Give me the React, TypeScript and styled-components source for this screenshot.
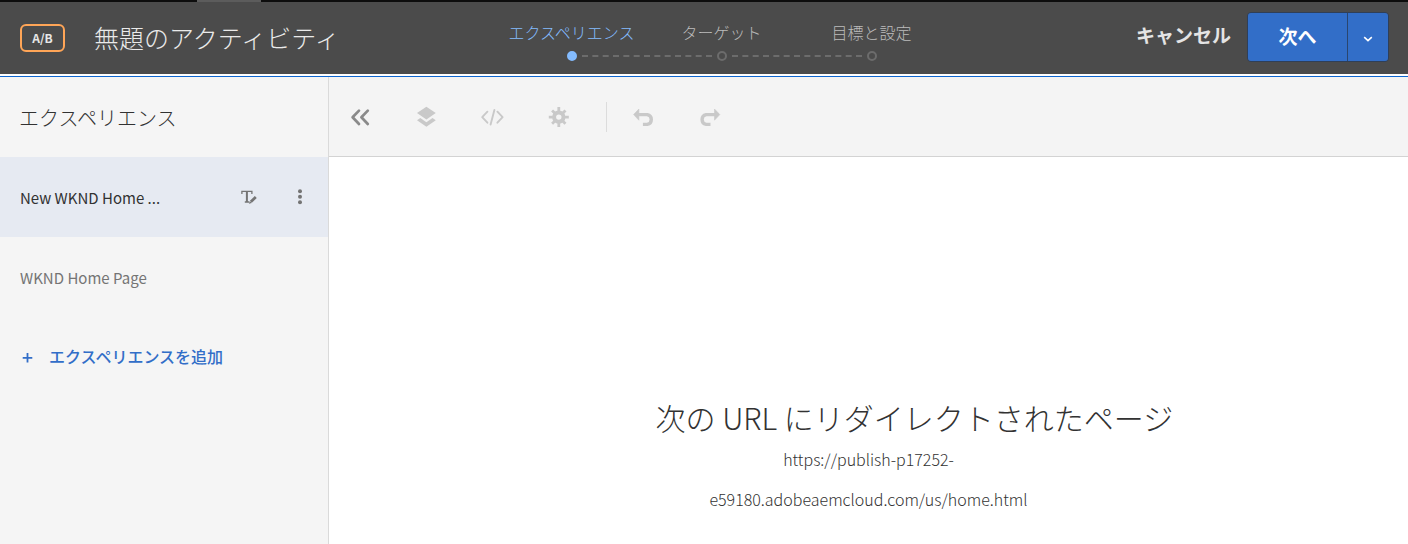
import React from "react";
import styled, { createGlobalStyle } from "styled-components";

const GlobalStyle = createGlobalStyle`
  *, *::before, *::after { box-sizing: border-box; }
  html, body, #root { height: 100%; }
  body {
    margin: 0;
    background: #ffffff;
    color: #323232;
    font-family: "Noto Sans CJK JP", sans-serif;
    font-size: 16px;
  }
  button { font-family: inherit; cursor: pointer; }
`;

const Page = styled.div`
  display: flex;
  flex-direction: column;
  min-height: 100%;
`;

const TopStrip = styled.div`
  height: 2px;
  padding-left: 197px;
  background: #0d0d0d;
`;

const TopStripThumb = styled.div`
  width: 64px;
  height: 2px;
  background: #5c5c5c;
`;

const Header = styled.header`
  display: grid;
  grid-template-columns: 1fr auto 1fr;
  height: 72px;
  padding: 0 19px 0 20px;
  background: #4b4b4b;
`;

const TitleGroup = styled.div`
  display: flex;
  align-items: center;
  gap: 29px;
`;

const Badge = styled.span`
  display: flex;
  align-items: center;
  justify-content: center;
  width: 45px;
  height: 28px;
  padding-bottom: 2px;
  border: 2px solid #ffa557;
  border-radius: 6px;
  color: #e6e6e6;
  font-size: 12px;
  font-weight: 700;
`;

const Title = styled.h1`
  margin: 0;
  padding-bottom: 2px;
  color: #eaeaea;
  font-size: 25px;
  font-weight: 300;
  line-height: 36px;
  white-space: nowrap;
`;

const Steps = styled.ol`
  display: flex;
  margin: 0 0 0 34px;
  padding: 18px 0 0;
  list-style: none;
`;

const Step = styled.li<{ $active?: boolean }>`
  display: flex;
  flex-direction: column;
  align-items: center;
  gap: 6px;
  width: 150px;
  color: ${(p) => (p.$active ? "#84bcff" : "#bcbcbc")};
  font-weight: 300;
  line-height: 25px;
  white-space: nowrap;
`;

const Track = styled.div`
  display: grid;
  grid-template-columns: 65px 10px 65px;
  gap: 5px;
  align-items: center;
  width: 150px;
`;

const StepDot = styled.span<{ $active?: boolean }>`
  grid-column: 2;
  width: 10px;
  height: 10px;
  border: 2px solid ${(p) => (p.$active ? "#84bcff" : "#6c6c6c")};
  border-radius: 50%;
  background: ${(p) => (p.$active ? "#84bcff" : "transparent")};
`;

const StepLine = styled.span`
  grid-column: 3;
  width: 130px;
  border-top: 2px dashed #6c6c6c;
`;

const Actions = styled.div`
  display: flex;
  align-items: center;
  justify-content: flex-end;
  gap: 16px;
  padding-bottom: 2px;
`;

const CancelButton = styled.button`
  padding: 0 0 4px;
  border: 0;
  background: none;
  color: #e4e4e4;
  font-size: 19px;
  font-weight: 700;
  line-height: 28px;
  white-space: nowrap;
`;

const SplitButton = styled.div`
  display: flex;
  height: 50px;
  overflow: hidden;
  border: 1px solid #2f3f58;
  border-radius: 4px;
`;

const NextButton = styled.button`
  width: 99px;
  padding: 0 0 4px;
  border: 0;
  background: #326ec8;
  color: #ffffff;
  font-size: 19px;
  font-weight: 700;
`;

const NextMenuButton = styled.button`
  display: flex;
  align-items: center;
  justify-content: center;
  width: 41px;
  padding: 4px 0 0;
  border: 0;
  border-left: 1px solid #2a466f;
  background: #326ec8;
  color: #ffffff;
`;

const Body = styled.div`
  display: flex;
  flex: 1;
  margin-top: 2px;
  border-top: 1px solid #0d66d0;
`;

const Sidebar = styled.aside`
  flex: none;
  width: 329px;
  border-right: 1px solid #dadada;
  background: #f5f5f5;
`;

const SidebarTitle = styled.h2`
  margin: 0;
  padding: 2px 19px 0;
  font-size: 20px;
  font-weight: 300;
  line-height: 78px;
`;

const ExperienceList = styled.ul`
  margin: 0;
  padding: 0;
  list-style: none;
`;

const Experience = styled.li<{ $selected?: boolean }>`
  display: flex;
  align-items: center;
  height: 80px;
  padding: 0 18px 0 20px;
  background: ${(p) => (p.$selected ? "#e6eaf2" : "transparent")};
  color: ${(p) => (p.$selected ? "#323232" : "#747474")};
`;

const ExperienceName = styled.span`
  flex: 1;
  font-size: 15px;
  white-space: nowrap;
`;

const RowButton = styled.button`
  display: flex;
  padding: 0;
  border: 0;
  margin-left: 32px;
  background: none;
  color: #747474;
`;

const AddButton = styled.button`
  display: flex;
  align-items: center;
  gap: 16px;
  height: 80px;
  padding: 0 22px 2px;
  border: 0;
  background: none;
  color: #326ec8;
  font-size: 16px;
  font-weight: 500;
`;

const Workspace = styled.main`
  display: flex;
  flex: 1;
  flex-direction: column;
  min-width: 0;
  background: #ffffff;
`;

const Toolbar = styled.div`
  display: flex;
  align-items: center;
  height: 80px;
  padding-left: 19px;
  gap: 42px;
  border-bottom: 1px solid #d3d3d3;
  background: #f4f4f4;
`;

const ToolButton = styled.button<{ $enabled?: boolean }>`
  display: flex;
  justify-content: center;
  width: 24px;
  padding: 0;
  border: 0;
  background: none;
  color: ${(p) => (p.$enabled ? "#8a8a8a" : "#c9c9c9")};
`;

const ToolDivider = styled.span`
  width: 1px;
  height: 30px;
  margin: 0 -17px 0 -6px;
  background: #dcdcdc;
`;

const Preview = styled.section`
  padding-top: 239px;
  text-align: center;
`;

const RedirectNotice = styled.div`
  width: 426px;
  margin: 0 auto;
`;

const RedirectTitle = styled.h2`
  margin: 0;
  font-size: 30px;
  font-weight: 300;
  line-height: 43px;
  text-align: left;
  white-space: nowrap;
`;

const RedirectUrl = styled.p`
  margin: 0;
  font-size: 16px;
  font-weight: 300;
  line-height: 40px;
`;

const CollapseIcon = () => (
  <svg width="20" height="20" viewBox="0 0 20 20" fill="none" stroke="currentColor" strokeWidth="2.7" strokeLinecap="round" strokeLinejoin="round">
    <path d="M9 3.6 2.6 10.2 9 17M17.8 3.6 11.4 10.2l6.4 6.8" />
  </svg>
);

const LayersIcon = () => (
  <svg width="20" height="21" viewBox="0 0 20 21" fill="currentColor">
    <path d="M10.4 .7 19.8 7.1 10.4 13.6 1 7.1ZM1 14.2l3.3-2.3 6.1 4.3 6.1-4.3 3.3 2.3-9.4 6.6Z" />
  </svg>
);

const CodeIcon = () => (
  <svg width="24" height="20" viewBox="0 0 24 20" fill="none" stroke="currentColor" strokeWidth="1.9" strokeLinecap="round" strokeLinejoin="round">
    <path d="M7.4 4.7 2.2 10.2l5.2 5.5M14.4 3 10.6 17.6M17.4 4.7l5.2 5.5-5.2 5.5" />
  </svg>
);

const GearIcon = () => (
  <svg width="21" height="20" viewBox="0 0 21 20" stroke="currentColor" fill="none">
    <circle cx="10.8" cy="10.1" r="4.7" strokeWidth="4" />
    <path
      d="M10.8 .1v4M10.8 16.1v4M.8 10.1h4M16.8 10.1h4M4.1 3.4l2.6 2.6M14.9 14.2l2.6 2.6M17.5 3.4l-2.6 2.6M6.7 14.2l-2.6 2.6"
      strokeWidth="2.8"
    />
  </svg>
);

const UndoIcon = () => (
  <svg width="22" height="20" viewBox="0 0 22 20">
    <path d="M5 7.6h9.3a5 5 0 0 1 0 9.8H9.9" fill="none" stroke="currentColor" strokeWidth="3.4" />
    <path d="M.6 7.6 5.9 2v11.2Z" fill="currentColor" stroke="currentColor" strokeWidth=".6" strokeLinejoin="round" />
  </svg>
);

const RedoIcon = () => (
  <svg width="22" height="20" viewBox="0 0 22 20">
    <path d="M16.4 7.6H7.1a5 5 0 0 0 0 9.8h4.4" fill="none" stroke="currentColor" strokeWidth="3.4" />
    <path d="M20.8 7.6 15.5 2v11.2Z" fill="currentColor" stroke="currentColor" strokeWidth=".6" strokeLinejoin="round" />
  </svg>
);

const RenameIcon = () => (
  <svg width="18" height="16" viewBox="0 0 18 16" fill="none" stroke="currentColor">
    <path d="M1.9 5V2.4h10V5M4.8 13h4.2" strokeWidth="1.3" />
    <path d="M6.9 2.4V13" strokeWidth="2" />
    <path d="m10.9 12.8 4.9-4.8" strokeWidth="2.8" />
    <path d="m8.9 14.8.9-2.9 2 2Z" fill="currentColor" stroke="none" />
  </svg>
);

const MoreIcon = () => (
  <svg width="20" height="16" viewBox="0 0 20 16" fill="currentColor">
    <circle cx="10" cy="2.2" r="2" />
    <circle cx="10" cy="7.7" r="2" />
    <circle cx="10" cy="13.2" r="2" />
  </svg>
);

const ChevronIcon = () => (
  <svg width="10" height="6" viewBox="0 0 10 6" fill="none" stroke="currentColor" strokeWidth="1.6">
    <path d="M1.2 1.2 5 4.6l3.8-3.4" />
  </svg>
);

const PlusIcon = () => (
  <svg width="11" height="13" viewBox="0 0 11 13" stroke="currentColor" strokeWidth="1.8">
    <path d="M5.5 3v9.6M.7 7.8h9.6" />
  </svg>
);

const steps = ["エクスペリエンス", "ターゲット", "目標と設定"];

export default function App() {
  return (
    <>
      <GlobalStyle />
      <Page>
        <TopStrip>
          <TopStripThumb />
        </TopStrip>
        <Header>
          <TitleGroup>
            <Badge>A/B</Badge>
            <Title>無題のアクティビティ</Title>
          </TitleGroup>
          <Steps>
            {steps.map((label, i) => (
              <Step key={label} $active={i === 0} aria-current={i === 0 ? "step" : undefined}>
                {label}
                <Track>
                  <StepDot $active={i === 0} />
                  {i < steps.length - 1 && <StepLine />}
                </Track>
              </Step>
            ))}
          </Steps>
          <Actions>
            <CancelButton type="button">キャンセル</CancelButton>
            <SplitButton>
              <NextButton type="button">次へ</NextButton>
              <NextMenuButton type="button" aria-label="その他の操作">
                <ChevronIcon />
              </NextMenuButton>
            </SplitButton>
          </Actions>
        </Header>
        <Body>
          <Sidebar>
            <SidebarTitle>エクスペリエンス</SidebarTitle>
            <ExperienceList>
              <Experience $selected>
                <ExperienceName>New WKND Home ...</ExperienceName>
                <RowButton type="button" aria-label="名前を変更">
                  <RenameIcon />
                </RowButton>
                <RowButton type="button" aria-label="メニュー">
                  <MoreIcon />
                </RowButton>
              </Experience>
              <Experience>
                <ExperienceName>WKND Home Page</ExperienceName>
              </Experience>
            </ExperienceList>
            <AddButton type="button">
              <PlusIcon />
              エクスペリエンスを追加
            </AddButton>
          </Sidebar>
          <Workspace>
            <Toolbar role="toolbar">
              <ToolButton type="button" $enabled aria-label="パネルを閉じる">
                <CollapseIcon />
              </ToolButton>
              <ToolButton type="button" aria-label="レイヤー">
                <LayersIcon />
              </ToolButton>
              <ToolButton type="button" aria-label="コード">
                <CodeIcon />
              </ToolButton>
              <ToolButton type="button" aria-label="設定">
                <GearIcon />
              </ToolButton>
              <ToolDivider />
              <ToolButton type="button" aria-label="元に戻す">
                <UndoIcon />
              </ToolButton>
              <ToolButton type="button" aria-label="やり直す">
                <RedoIcon />
              </ToolButton>
            </Toolbar>
            <Preview>
              <RedirectNotice>
                <RedirectTitle>次の URL にリダイレクトされたページ</RedirectTitle>
                <RedirectUrl>https://publish-p17252-e59180.adobeaemcloud.com/us/home.html</RedirectUrl>
              </RedirectNotice>
            </Preview>
          </Workspace>
        </Body>
      </Page>
    </>
  );
}
